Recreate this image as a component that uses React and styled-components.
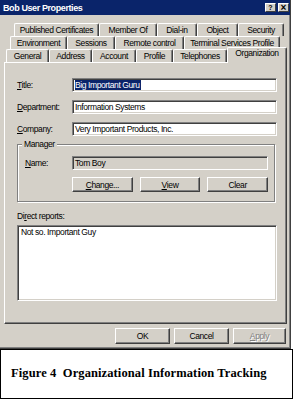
import React from 'react';
import styled, {createGlobalStyle} from 'styled-components';

const GlobalStyle = createGlobalStyle`
  body {
    margin: 0;
    background: #ffffff;
    font-family: "Liberation Sans", Arial, sans-serif;
  }
`;

const grey = '#d4d0c8';

const tabRows = [
  {indent: 10, tabs: [
    {label: 'Published Certificates', w: 85},
    {label: 'Member Of', w: 58},
    {label: 'Dial-in', w: 40},
    {label: 'Object', w: 41},
    {label: 'Security', w: 46},
  ]},
  {indent: 6, tabs: [
    {label: 'Environment', w: 57},
    {label: 'Sessions', w: 48},
    {label: 'Remote control', w: 69},
    {label: 'Terminal Services Profile', w: 96},
  ]},
  {indent: 2, tabs: [
    {label: 'General', w: 43},
    {label: 'Address', w: 43},
    {label: 'Account', w: 44},
    {label: 'Profile', w: 37},
    {label: 'Telephones', w: 54},
    {label: 'Organization', w: 60, active: true},
  ]},
];

function App() {
  return (
    <>
      <GlobalStyle />
      <Page>
        <Dialog>
          <TitleBar>
            <Caption>Bob User Properties</Caption>
            <CapButtons>
              <CapButton>?</CapButton>
              <CapButton $close>×</CapButton>
            </CapButtons>
          </TitleBar>
          <Body>
            <TabStrip>
              {tabRows.map((row, i) => (
                <TabRow key={i} $indent={row.indent}>
                  {row.tabs.map(t => (
                    <Tab key={t.label} $w={t.w} $active={t.active}>{t.label}</Tab>
                  ))}
                </TabRow>
              ))}
            </TabStrip>
            <Panel>
              <FieldRow>
                <Label><u>T</u>itle:</Label>
                <TextBox><Selected>Big Important Guru</Selected></TextBox>
              </FieldRow>
              <FieldRow>
                <Label><u>D</u>epartment:</Label>
                <TextBox>Information Systems</TextBox>
              </FieldRow>
              <FieldRow>
                <Label><u>C</u>ompany:</Label>
                <TextBox>Very Important Products, Inc.</TextBox>
              </FieldRow>
              <GroupBox>
                <Legend>Manager</Legend>
                <NameRow>
                  <Label><u>N</u>ame:</Label>
                  <TextBox $readOnly>Tom Boy</TextBox>
                </NameRow>
                <GroupButtons>
                  <Button $w={61}><u>C</u>hange...</Button>
                  <Button $w={61}><u>V</u>iew</Button>
                  <Button $w={61}>Clear</Button>
                </GroupButtons>
              </GroupBox>
              <ListLabel>Di<u>r</u>ect reports:</ListLabel>
              <ListBox>Not so. Important Guy</ListBox>
            </Panel>
            <ButtonBar>
              <Button $w={55} $h={16}>OK</Button>
              <Button $w={55} $h={16}>Cancel</Button>
              <Button $w={53} $h={16} $disabled><u>A</u>pply</Button>
            </ButtonBar>
          </Body>
        </Dialog>
        <FigureCaption>Figure 4&nbsp;&nbsp;Organizational Information Tracking</FigureCaption>
      </Page>
    </>
  );
}

const Page = styled.div`
  width: 297px;
  height: 401px;
  background: #fff;
`;

const Dialog = styled.div`
  width: 291px;
  height: 349px;
  box-sizing: border-box;
  background: ${grey};
  border-right: 1px solid #404040;
  border-bottom: 1px solid #404040;
  box-shadow: inset -1px -1px 0 #808080;
  display: flex;
  flex-direction: column;
  font-size: 8.5px;
  letter-spacing: -0.4px;
  color: #000;
`;

const TitleBar = styled.div`
  height: 15px;
  background: #0a246a;
  display: flex;
  align-items: center;
  justify-content: space-between;
  padding: 0 1px 0 3px;
`;

const Caption = styled.div`
  color: #fff;
  font-weight: bold;
  font-size: 9px;
  letter-spacing: -0.4px;
`;

const CapButtons = styled.div`
  display: flex;
  gap: 2px;
`;

const CapButton = styled.div`
  width: 11px;
  height: 9px;
  box-sizing: border-box;
  background: ${grey};
  border-top: 1px solid #fff;
  border-left: 1px solid #fff;
  border-right: 1px solid #404040;
  border-bottom: 1px solid #404040;
  font-size: ${p => (p.$close ? '10px' : '7px')};
  font-weight: bold;
  line-height: 7px;
  text-align: center;
  letter-spacing: 0;
`;

const Body = styled.div`
  flex: 1;
  padding: 8px 0 0 4px;
  display: flex;
  flex-direction: column;
`;

const TabStrip = styled.div`
  display: flex;
  flex-direction: column;
`;

const TabRow = styled.div`
  display: flex;
  align-items: flex-end;
  height: 13px;
  padding-left: ${p => p.$indent}px;
`;

const Tab = styled.div`
  width: ${p => p.$w}px;
  height: ${p => (p.$active ? 16 : 13)}px;
  box-sizing: border-box;
  background: ${grey};
  border-top: 1px solid #fff;
  border-left: 1px solid #fff;
  border-right: 1px solid #404040;
  border-radius: 2px 2px 0 0;
  box-shadow: inset -1px 0 0 #808080;
  text-align: center;
  line-height: ${p => (p.$active ? 11 : 12)}px;
  white-space: nowrap;
  position: relative;
  z-index: ${p => (p.$active ? 2 : 1)};
  margin-bottom: ${p => (p.$active ? -1 : 0)}px;
`;

const Panel = styled.div`
  width: 283px;
  height: 262px;
  box-sizing: border-box;
  border-top: 1px solid #fff;
  border-left: 1px solid #fff;
  border-right: 1px solid #404040;
  border-bottom: 1px solid #404040;
  box-shadow: inset -1px -1px 0 #808080;
  padding: 15px 9px 0 12px;
`;

const FieldRow = styled.div`
  display: grid;
  grid-template-columns: 55px 1fr;
  align-items: center;
  height: 14px;
  margin-bottom: 8px;
`;

const Label = styled.div`
  white-space: nowrap;
`;

const TextBox = styled.div`
  height: 14px;
  box-sizing: border-box;
  background: ${p => (p.$readOnly ? grey : '#fff')};
  border-top: 1px solid #808080;
  border-left: 1px solid #808080;
  border-right: 1px solid #fff;
  border-bottom: 1px solid #fff;
  box-shadow: inset 1px 1px 0 #404040, inset -1px -1px 0 ${grey};
  padding: 1px 2px 0 2px;
  line-height: 10px;
  white-space: nowrap;
  overflow: hidden;
`;

const Selected = styled.span`
  background: #0a246a;
  color: #fff;
  display: inline-block;
  height: 10px;
  padding-right: 1px;
`;

const GroupBox = styled.div`
  position: relative;
  margin: 5px 2px 0 0;
  padding: 11px 6px 9px 7px;
  border: 1px solid #808080;
  box-shadow: 1px 1px 0 #fff, inset 1px 1px 0 #fff;
`;

const Legend = styled.div`
  position: absolute;
  top: -6px;
  left: 4px;
  padding: 0 2px;
  background: ${grey};
  line-height: 10px;
`;

const NameRow = styled(FieldRow)`
  grid-template-columns: 47px 1fr;
  margin-bottom: 7px;
`;

const GroupButtons = styled.div`
  display: flex;
  gap: 7px;
  margin-left: 47px;
`;

const Button = styled.div`
  width: ${p => p.$w}px;
  height: ${p => p.$h || 15}px;
  box-sizing: border-box;
  background: ${grey};
  border-top: 1px solid #fff;
  border-left: 1px solid #fff;
  border-right: 1px solid #404040;
  border-bottom: 1px solid #404040;
  box-shadow: inset -1px -1px 0 #808080;
  display: flex;
  align-items: center;
  justify-content: center;
  color: ${p => (p.$disabled ? '#808080' : '#000')};
  text-shadow: ${p => (p.$disabled ? '1px 1px 0 #fff' : 'none')};
`;

const ListLabel = styled.div`
  height: 12px;
  line-height: 12px;
  margin: 8px 0 3px;
`;

const ListBox = styled.div`
  height: 76px;
  box-sizing: border-box;
  background: #fff;
  border-top: 1px solid #808080;
  border-left: 1px solid #808080;
  border-right: 1px solid #fff;
  border-bottom: 1px solid #fff;
  box-shadow: inset 1px 1px 0 #404040, inset -1px -1px 0 ${grey};
  padding: 1px 3px;
  line-height: 10px;
`;

const ButtonBar = styled.div`
  display: flex;
  justify-content: flex-end;
  gap: 4px;
  padding: 4px 4px 0 0;
`;

const FigureCaption = styled.div`
  width: 293px;
  height: 50px;
  box-sizing: border-box;
  border: 1px solid #000;
  background: #fff;
  display: flex;
  align-items: center;
  padding: 0 0 2px 10px;
  font-family: "Liberation Serif", "Times New Roman", serif;
  font-weight: bold;
  font-size: 12.5px;
  letter-spacing: 0.1px;
  color: #000;
`;

export default App;
